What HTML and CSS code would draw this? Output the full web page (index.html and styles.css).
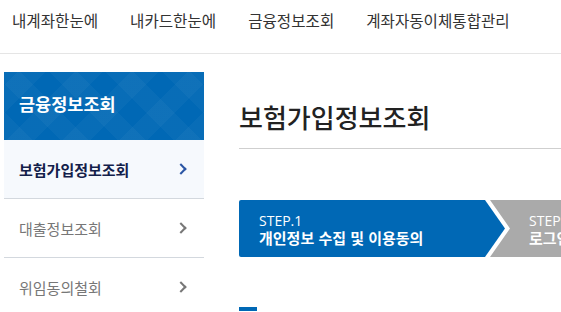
FILE: index.html
```html
<!DOCTYPE html>
<html lang="ko">

<head>
    <meta charset="UTF-8">
    <meta name="viewport" content="width=device-width, initial-scale=1.0">
    <title>보험가입정보조회</title>
    <link rel="stylesheet" href="styles.css">
</head>

<body>
    <div class="header">
        <ul class="gnb">
            <li>내계좌한눈에</li>
            <li>내카드한눈에</li>
            <li>금융정보조회</li>
            <li>계좌자동이체통합관리</li>
        </ul>
    </div>

    <div class="wrap">
        <div class="lnb">
            <div class="lnb-title">금융정보조회</div>
            <ul class="lnb-list">
                <li class="on">보험가입정보조회<span class="arr"></span></li>
                <li>대출정보조회<span class="arr"></span></li>
                <li>위임동의철회<span class="arr"></span></li>
            </ul>
        </div>

        <div class="content">
            <h2 class="page-title">보험가입정보조회</h2>
            <div class="steps">
                <div class="step step-on">
                    <span class="num">STEP.1</span>
                    <span class="txt">개인정보 수집 및 이용동의</span>
                </div>
                <div class="step step-next">
                    <span class="num">STEP.2</span>
                    <span class="txt">로그인</span>
                </div>
            </div>
            <div class="sub-bar"></div>
        </div>
    </div>
</body>

</html>
```

FILE: styles.css
```css
body {
    margin: 0;
    padding: 0;
    background: #fff;
    font-family: "Noto Sans CJK KR", "Noto Sans", sans-serif;
    color: #333;
    overflow: hidden;
}

ul {
    list-style: none;
    margin: 0;
    padding: 0;
}

.header {
    height: 54px;
    border-bottom: 1px solid #e5e5e5;
    box-sizing: border-box;
}

.gnb {
    display: flex;
    gap: 32px;
    padding: 9px 0 0 12px;
}

.gnb li {
    font-size: 15.6px;
    color: #333;
    line-height: 22px;
    white-space: nowrap;
}

.wrap {
    display: flex;
    padding: 18px 0 0 4px;
}

.lnb {
    width: 200px;
    flex-shrink: 0;
}

.lnb-title {
    height: 68px;
    box-sizing: border-box;
    padding: 19px 0 0 15px;
    background-color: #0068b5;
    background-image:
        repeating-linear-gradient(45deg, rgba(255,255,255,0.03) 0 20px, transparent 20px 40px),
        repeating-linear-gradient(-45deg, rgba(255,255,255,0.03) 0 20px, transparent 20px 40px);
    color: #fff;
    font-size: 17.5px;
    font-weight: 700;
    line-height: 26px;
}

.lnb-list li {
    display: flex;
    justify-content: space-between;
    align-items: center;
    height: 58px;
    padding: 0 19px 0 15px;
    border-bottom: 1px solid #d3d8de;
    font-size: 15px;
    color: #777;
}

.lnb-list li.on {
    background: #f6f9fd;
    color: #13204a;
    font-weight: 700;
}

.arr {
    width: 6px;
    height: 6px;
    border-top: 2px solid #777;
    border-right: 2px solid #777;
    transform: rotate(45deg);
}

.on .arr {
    border-color: #2a55a4;
}

.content {
    flex: 1;
    min-width: 0;
    padding-left: 35px;
}

.page-title {
    margin: 0;
    padding: 27px 0 13px;
    font-size: 26px;
    font-weight: 500;
    line-height: 36px;
    color: #222;
    border-bottom: 1px solid #cfcfcf;
}

.steps {
    display: flex;
    margin-top: 51px;
    height: 57px;
}

.step {
    display: flex;
    flex-direction: column;
    justify-content: center;
    color: #fff;
    font-size: 15px;
    line-height: 17px;
    flex-shrink: 0;
    white-space: nowrap;
}

.step-on {
    width: 266px;
    padding-left: 20px;
    box-sizing: border-box;
    background: #0068b5;
    border-radius: 2px 0 0 2px;
    clip-path: polygon(0 0, calc(100% - 20px) 0, 100% 50%, calc(100% - 20px) 100%, 0 100%);
    position: relative;
    z-index: 1;
}

.step-next {
    width: 200px;
    margin-left: -15px;
    padding-left: 39px;
    box-sizing: border-box;
    background: #aaa;
    clip-path: polygon(0 0, 100% 0, 100% 100%, 0 100%, 20px 50%);
}

.num {
    font-family: "Open Sans", "Noto Sans", sans-serif;
    font-size: 14px;
}

.txt {
    font-weight: 700;
}

.sub-bar {
    width: 18px;
    height: 4px;
    margin-top: 50px;
    background: #0068b5;
}
```
